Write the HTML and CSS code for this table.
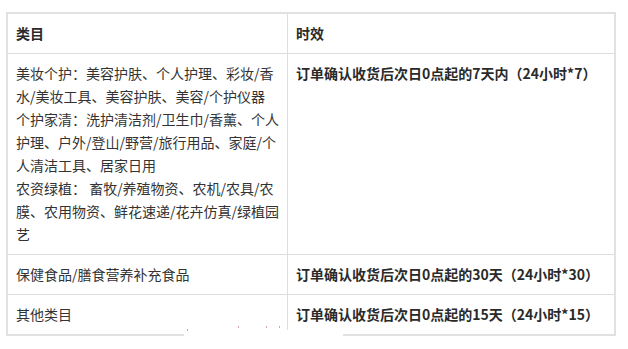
FILE: index.html
```html
<!DOCTYPE html>
<html lang="zh-CN">
<head>
<meta charset="utf-8">
<title>时效</title>
<link rel="stylesheet" href="styles.css">
</head>
<body>
<div class="page">
  <table class="rules">
    <colgroup>
      <col class="col-cat">
      <col class="col-time">
    </colgroup>
    <thead>
      <tr>
        <th>类目</th>
        <th>时效</th>
      </tr>
    </thead>
    <tbody>
      <tr>
        <td>美妆个护：美容护肤、个人护理、彩妆/香水/美妆工具、美容护肤、美容/个护仪器<br>个护家清：洗护清洁剂/卫生巾/香薰、个人护理、户外/登山/野营/旅行用品、家庭/个人清洁工具、居家日用<br>农资绿植： 畜牧/养殖物资、农机/农具/农膜、农用物资、鲜花速递/花卉仿真/绿植园艺</td>
        <td class="time">订单确认收货后次日0点起的7天内（24小时*7）</td>
      </tr>
      <tr>
        <td>保健食品/膳食营养补充食品</td>
        <td class="time">订单确认收货后次日0点起的30天（24小时*30）</td>
      </tr>
      <tr>
        <td>其他类目</td>
        <td class="time">订单确认收货后次日0点起的15天（24小时*15）</td>
      </tr>
    </tbody>
  </table>
  <div class="smudge smudge-a"></div>
  <div class="smudge smudge-b"></div>
  <span class="dot dot-1"></span>
  <span class="dot dot-2"></span>
  <span class="dot dot-3"></span>
  <span class="dot dot-4"></span>
</div>
</body>
</html>
```

FILE: styles.css
```css
html, body {
  margin: 0;
  padding: 0;
  background: #ffffff;
}

.page {
  position: relative;
  padding: 12px 0 0 6px;
  font-family: "Noto Sans CJK SC", "Noto Sans", sans-serif;
  font-size: 14px;
  color: #333333;
}

.rules {
  width: 610px;
  table-layout: fixed;
  border-collapse: separate;
  border-spacing: 0;
  border: 2px solid #e1e1e1;
}

.col-cat {
  width: 280px;
}

.rules th,
.rules td {
  padding: 8px 4px 8px 8px;
  line-height: 23px;
  text-align: left;
  vertical-align: top;
  border-bottom: 1px solid #dedede;
  border-right: 1px solid #dedede;
}

.rules th:last-child,
.rules td:last-child {
  border-right: 0;
}

.rules tbody tr:last-child td {
  border-bottom: 0;
}

.rules th {
  font-weight: 700;
  color: #2a2a2a;
}

.rules .time {
  font-weight: 700;
  color: #2a2a2a;
  white-space: nowrap;
}

.smudge {
  position: absolute;
  background: #ffffff;
}

.smudge-a {
  left: 184px;
  top: 296px;
  width: 102px;
  height: 53px;
}

.smudge-b {
  left: 286px;
  top: 330px;
  width: 57px;
  height: 19px;
}

.dot {
  position: absolute;
  width: 1px;
  height: 2px;
  background: #d9a0a0;
}

.dot-1 { left: 187px; top: 329px; }
.dot-2 { left: 238px; top: 326px; }
.dot-3 { left: 266px; top: 326px; }
.dot-4 { left: 279px; top: 326px; }
```
